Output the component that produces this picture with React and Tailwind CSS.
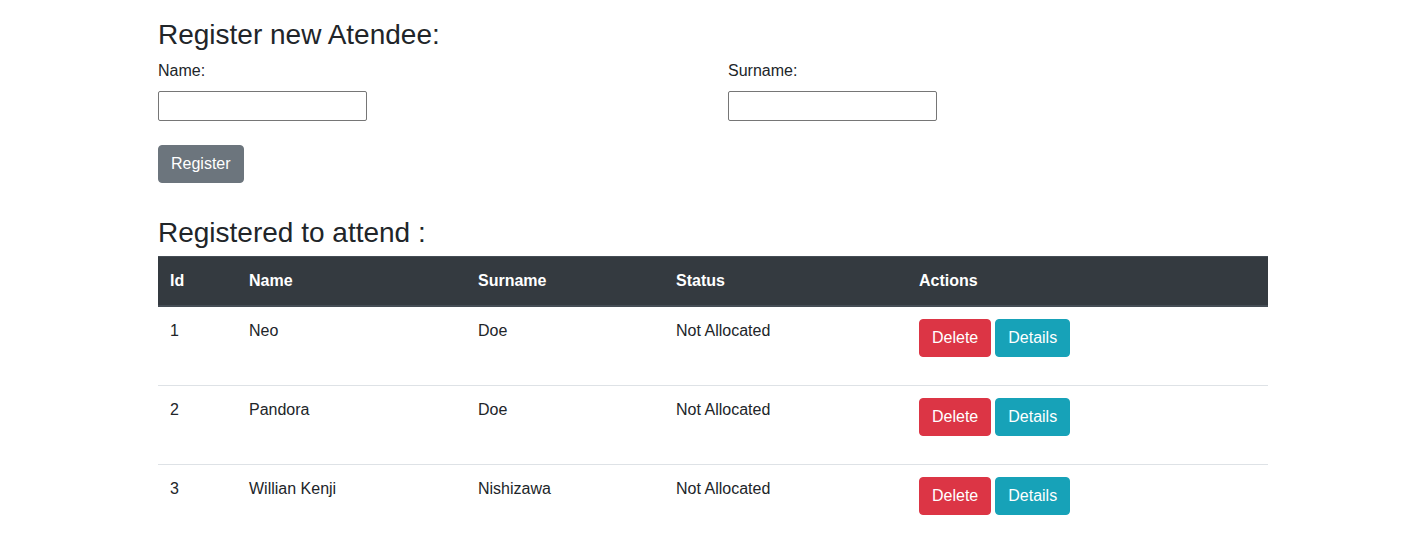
const attendees = [
  { id: 1, name: "Neo", surname: "Doe", status: "Not Allocated" },
  { id: 2, name: "Pandora", surname: "Doe", status: "Not Allocated" },
  { id: 3, name: "Willian Kenji", surname: "Nishizawa", status: "Not Allocated" },
];

function Field({ label }) {
  return (
    <div className="flex flex-col items-start">
      <label className="mb-2 leading-6">{label}</label>
      <input type="text" className="w-[209px] h-[30px] border border-[#767676] rounded-[2px] bg-white px-1 outline-none" />
    </div>
  );
}

export default function App() {
  return (
    <div className="min-h-screen bg-white text-[#212529] text-base font-['Liberation_Sans',Arial,sans-serif] pt-[18px] pl-[158px]">
      <div className="w-[1110px]">
        <h3 className="text-[28px] leading-[1.2] font-normal mb-[7px]">Register new Atendee:</h3>
        <div className="grid grid-cols-2 gap-x-[30px]">
          <Field label="Name:" />
          <Field label="Surname:" />
        </div>
        <button className="mt-6 h-[38px] px-3 rounded bg-[#6c757d] border border-[#6c757d] text-white leading-6">
          Register
        </button>

        <h3 className="text-[28px] leading-[1.2] font-normal mt-[33px] mb-[7px]">Registered to attend :</h3>
        <table className="w-full border-collapse text-left">
          <thead>
            <tr className="bg-[#343a40] text-white">
              <th className="w-[79px] px-3 py-3 font-bold leading-6 border-t border-b-2 border-[#454d55]">Id</th>
              <th className="w-[229px] px-3 py-3 font-bold leading-6 border-t border-b-2 border-[#454d55]">Name</th>
              <th className="w-[198px] px-3 py-3 font-bold leading-6 border-t border-b-2 border-[#454d55]">Surname</th>
              <th className="w-[243px] px-3 py-3 font-bold leading-6 border-t border-b-2 border-[#454d55]">Status</th>
              <th className="px-3 py-3 font-bold leading-6 border-t border-b-2 border-[#454d55]">Actions</th>
            </tr>
          </thead>
          <tbody>
            {attendees.map((a) => (
              <tr key={a.id} className="border-t border-[#dee2e6] align-top">
                <td className="px-3 py-3 leading-6">{a.id}</td>
                <td className="px-3 py-3 leading-6">{a.name}</td>
                <td className="px-3 py-3 leading-6">{a.surname}</td>
                <td className="px-3 py-3 leading-6">{a.status}</td>
                <td className="px-3 py-3 leading-6">
                  <div className="flex gap-1 mb-4">
                    <button className="h-[38px] px-3 rounded bg-[#dc3545] border border-[#dc3545] text-white leading-6">Delete</button>
                    <button className="h-[38px] px-3 rounded bg-[#17a2b8] border border-[#17a2b8] text-white leading-6">Details</button>
                  </div>
                </td>
              </tr>
            ))}
          </tbody>
        </table>
      </div>
    </div>
  );
}
